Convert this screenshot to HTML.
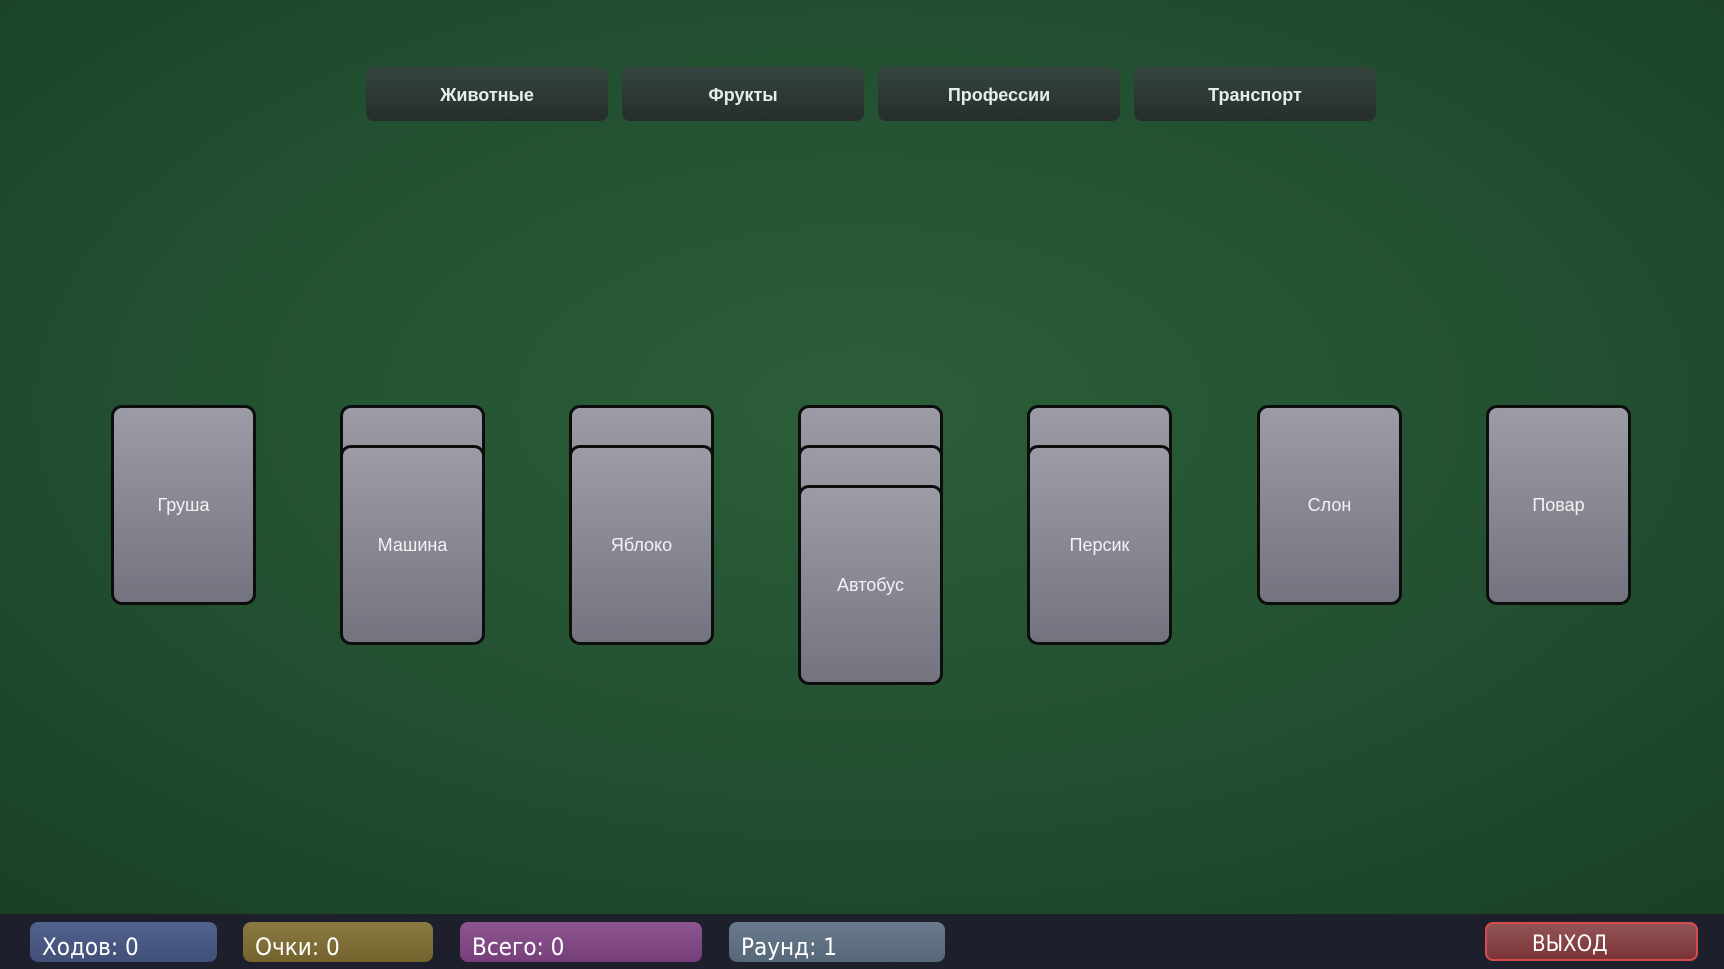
<!DOCTYPE html>
<html><head><meta charset="utf-8"><style>
*{margin:0;padding:0;box-sizing:border-box}
body{width:1724px;height:969px;overflow:hidden;font-family:"Liberation Sans","DejaVu Sans",sans-serif;position:relative;background:radial-gradient(ellipse 75% 70% at 50% 42%,#2b5e38 0%,#225030 55%,#1a3f25 100%)}
.tb{position:absolute;top:67px;width:242px;height:54px;border-radius:8px;background:linear-gradient(#36443f,#262e2d);color:#e8ece8;font-size:18px;font-weight:bold;display:flex;align-items:center;justify-content:center;padding-top:2px}
.card{position:absolute;width:145px;height:200px;border:3px solid #0c0d0c;border-radius:11px;background:linear-gradient(#9c9ca6,#747480);color:#f2f2f4;font-size:18px;display:flex;align-items:center;justify-content:center}
.bar{position:absolute;left:0;top:914px;width:1724px;height:55px;background:#1d202c}
.pill{position:absolute;top:922px;height:40px;border-radius:8px;color:#fff;font-size:24px;padding:11px 0 0 12px;font-family:"DejaVu Sans Condensed","DejaVu Sans",sans-serif}
</style></head><body>
<div class="tb" style="left:366px">Животные</div>
<div class="tb" style="left:622px">Фрукты</div>
<div class="tb" style="left:878px">Профессии</div>
<div class="tb" style="left:1134px">Транспорт</div>

<div class="card" style="left:111px;top:405px">Груша</div>

<div class="card" style="left:340px;top:405px"></div>
<div class="card" style="left:340px;top:445px">Машина</div>

<div class="card" style="left:569px;top:405px"></div>
<div class="card" style="left:569px;top:445px">Яблоко</div>

<div class="card" style="left:798px;top:405px"></div>
<div class="card" style="left:798px;top:445px"></div>
<div class="card" style="left:798px;top:485px">Автобус</div>

<div class="card" style="left:1027px;top:405px"></div>
<div class="card" style="left:1027px;top:445px">Персик</div>

<div class="card" style="left:1257px;top:405px">Слон</div>
<div class="card" style="left:1486px;top:405px">Повар</div>

<div class="bar"></div>
<div class="pill" style="left:30px;width:187px;background:linear-gradient(#52628e,#415078)">Ходов: 0</div>
<div class="pill" style="left:243px;width:190px;background:linear-gradient(#8c7a45,#73632d)">Очки: 0</div>
<div class="pill" style="left:460px;width:242px;background:linear-gradient(#8d5690,#763f7a)">Всего: 0</div>
<div class="pill" style="left:729px;width:216px;background:linear-gradient(#687a8c,#566878)">Раунд: 1</div>
<div class="pill" style="left:1485px;width:213px;top:922px;height:39px;background:linear-gradient(#935558,#7a3336);border:2px solid #d54c4c;padding:8px 0 0 45px;font-size:22px">ВЫХОД</div>
</body></html>
